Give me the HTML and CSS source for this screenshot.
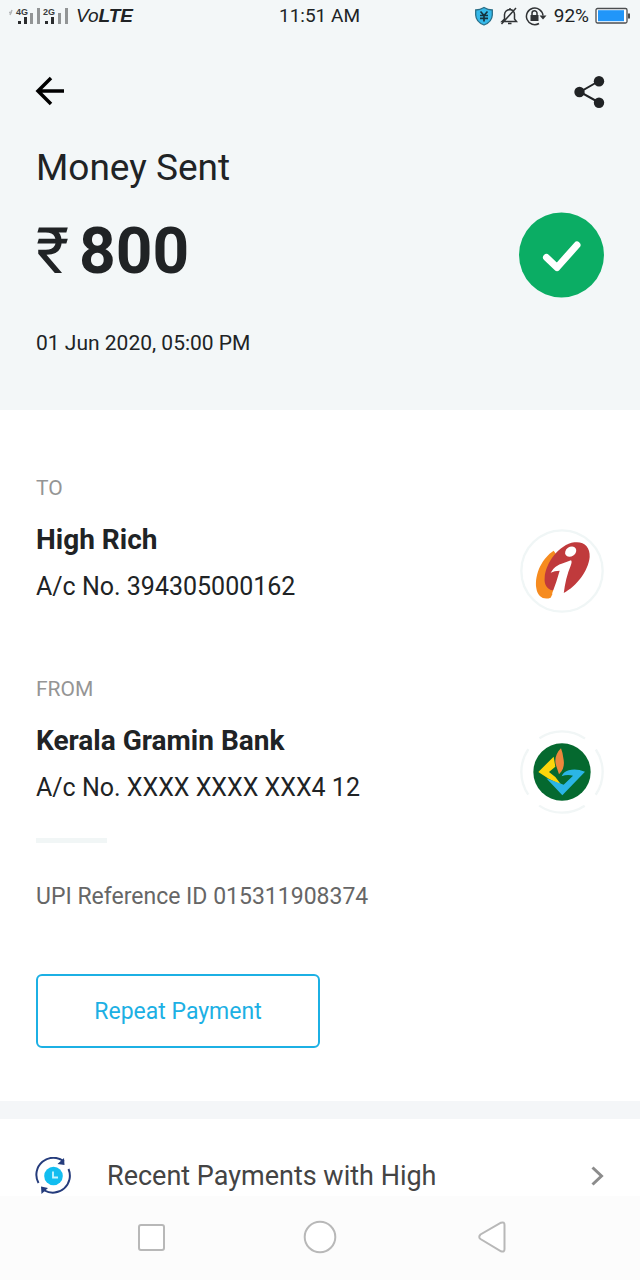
FILE: index.html
```html
<!DOCTYPE html>
<html lang="en">
<head>
<meta charset="utf-8">
<meta name="viewport" content="width=device-width, initial-scale=1">
<title>Money Sent</title>
<link rel="stylesheet" href="styles.css">
</head>
<body>
<div class="screen">
  <header class="summary">
    <div class="status">
      <div class="status-left">
        <svg class="signal" viewBox="0 0 64 24" width="64" height="24">
          <path d="M1 8.500h3M4 6l-2 5" stroke="#b5b8ba" stroke-width="1.500" fill="none"/>
          <text x="8" y="11" class="signal-text">4G</text>
          <path fill="#2a2c2e" d="M10 17h3v3h-3zM16 13h3v7h-3zM37 17h3v3h-3zM43 13h3v7h-3z"/>
          <path fill="#929596" d="M22 9h3v11h-3zM29 4h3v16h-3zM50 9h3v11h-3zM57 4h3v16h-3z"/>
          <text x="35" y="11" class="signal-text">2G</text>
        </svg>
        <span class="volte">Vo<b>LTE</b></span>
      </div>
      <span class="clock">11:51 AM</span>
      <div class="status-right">
        <svg viewBox="0 0 20 20" width="20" height="20">
          <path d="M10 1.500Q14 4 18.300 4V9Q18 16 10 19Q2 16 1.700 9V4Q6 4 10 1.500Z" fill="#35b9ea" stroke="#2a6f88" stroke-width="1.300"/>
          <path d="M6.500 5.500L10 9.500L13.500 5.500M6 9.500h8M6 12.300h8M10 9.500v6" fill="none" stroke="#143340" stroke-width="1.700"/>
        </svg>
        <svg viewBox="0 0 18 20" width="18" height="20">
          <path d="M2 15.500h14.500l-2-2.500V8q-.5-4-4.500-4.500Q5 4 4.500 8.500V13zM10 3.500V2M8 17.500h3.500M16 2L1.500 18" fill="none" stroke="#303335" stroke-width="1.500"/>
        </svg>
        <svg viewBox="0 0 24 20" width="24" height="20">
          <path d="M15 17.500A8.300 8.300 0 1 1 19 9.500" fill="none" stroke="#303335" stroke-width="1.500"/>
          <path d="M15.500 9.500h7L19 13.500zM6.500 9h8v6h-8z" fill="#303335"/>
          <path d="M8 9V7.300a2.500 2.500 0 0 1 5 0V9" fill="none" stroke="#303335" stroke-width="1.500"/>
        </svg>
        <span class="percent">92%</span>
        <svg viewBox="0 0 36 18" width="36" height="18">
          <rect x="1" y="1.500" width="31" height="14.500" rx="1.500" fill="#fff" stroke="#4b4e50" stroke-width="1.300"/>
          <path fill="#2196f9" d="M3 3.200h26v11H3z"/>
          <path fill="#4b4e50" d="M33 6.500h2v5h-2z"/>
        </svg>
      </div>
    </div>

    <div class="appbar">
      <button class="icon-button" aria-label="Back">
        <svg viewBox="0 0 30 30" width="30" height="30">
          <path d="M29 15H3M16 2L3 15l13 13" fill="none" stroke="#000" stroke-width="3.500"/>
        </svg>
      </button>
      <button class="icon-button" aria-label="Share">
        <svg viewBox="0 0 32 34" width="32" height="34">
          <path d="M26 7L7 18l19 10.500" fill="none" stroke="#202325" stroke-width="2"/>
          <g fill="#202325"><circle cx="26" cy="7.200" r="5.200"/><circle cx="6.500" cy="18" r="5.200"/><circle cx="26" cy="28.700" r="5.200"/></g>
        </svg>
      </button>
    </div>

    <h1 class="title">Money Sent</h1>
    <div class="amount-row">
      <div class="amount"><span class="rupee">₹</span><span>800</span></div>
      <svg viewBox="0 0 86 86" width="86" height="86">
        <circle cx="43.500" cy="43" r="42.500" fill="#0bad64"/>
        <path d="M28.500 45.500L39 55.500L59 33" fill="none" stroke="#fff" stroke-width="7" stroke-linecap="round" stroke-linejoin="round"/>
      </svg>
    </div>
    <p class="date">01 Jun 2020, 05:00 PM</p>
  </header>

  <main class="details">
    <section class="party">
      <h2 class="label">TO</h2>
      <div class="party-row">
        <div>
          <p class="name">High Rich</p>
          <p class="account">A/c No. 394305000162</p>
        </div>
        <svg class="logo" viewBox="27 26 252 252">
          <circle cx="153" cy="152" r="122" fill="#fff" stroke="#f0f6f6" stroke-width="7"/>
          <path d="M128 91C94 113 70 160 76 204C80 231 100 240 119 232L132 205L170 150Z" fill="#f68b1f"/>
          <path d="M190 66C219 62 238 80 236 110C232 152 197 198 158 218L126 210C108 208 99 192 101 172C104 128 144 73 190 66Z" fill="#c03a3c"/>
          <ellipse cx="179" cy="94" rx="18" ry="14" transform="rotate(-35 179 94)" fill="#fff"/>
          <path d="M119 157Q130 136 158 128L180 120Q184 124 179 136Q164 171 158 220L123 220Q137 184 146 151Q130 151 119 157Z" fill="#fff"/>
        </svg>
      </div>
    </section>

    <section class="party">
      <h2 class="label">FROM</h2>
      <div class="party-row">
        <div>
          <p class="name">Kerala Gramin Bank</p>
          <p class="account">A/c No. XXXX XXXX XXX4 12</p>
        </div>
        <svg class="logo" viewBox="29 28 252 252">
          <circle cx="155" cy="154" r="122" fill="none" stroke="#f1f6f6" stroke-width="7" pathLength="360" stroke-dasharray="68 22" stroke-dashoffset="34"/>
          <circle cx="155" cy="154" r="86" fill="#05692f"/>
          <path d="M130 108L84 154L115 174L154 194L135 169L116 154L135 138Z" fill="#fcd50b"/>
          <path d="M152 83C136 98 131 119 138 137L146 161C163 144 162 126 159 112Q158 99 152 83Z" fill="#ee873c"/>
          <path d="M108 173L156 224L224 153Q196 142 175 149Q159 154 154 167Q170 160 188 165L160 192Z" fill="#2bb5e6"/>
        </svg>
      </div>
    </section>

    <hr class="rule">
    <p class="reference">UPI Reference ID 015311908374</p>
    <button class="repeat">Repeat Payment</button>
  </main>

  <a class="recent" href="#">
    <svg viewBox="0 0 38 38" width="38" height="38">
      <g fill="none" stroke="#253c7c" stroke-width="2">
        <path d="M3.500 26A17 17 0 0 1 29 4.500M33.500 12A17 17 0 0 1 9.500 33.500"/>
      </g>
      <path d="M29 1l.5 7-7-1zM6.500 37L6 29.500l7 1.500z" fill="#253c7c"/>
      <circle cx="18.500" cy="19" r="9.300" fill="#12bdf0"/>
      <path d="M18 14.500v6h5" fill="none" stroke="#c8f4ff" stroke-width="1.800"/>
    </svg>
    <span class="recent-text">Recent Payments with High</span>
    <svg viewBox="0 0 14 22" width="14" height="22">
      <path d="M2.500 2.500l9 8.500-9 8.500" fill="none" stroke="#8c8c8c" stroke-width="3"/>
    </svg>
  </a>

  <nav class="navbar">
    <button class="nav-button" aria-label="Recent apps">
      <svg viewBox="0 0 34 34" width="34" height="34"><rect x="5" y="5" width="25" height="25" rx="2" class="nav-shape"/></svg>
    </button>
    <button class="nav-button" aria-label="Home">
      <svg viewBox="0 0 34 34" width="34" height="34"><circle cx="17" cy="17" r="15.300" class="nav-shape"/></svg>
    </button>
    <button class="nav-button" aria-label="Back">
      <svg viewBox="0 0 34 34" width="34" height="34"><path d="M29 2.700L8.500 14.500Q6 17 8.500 19L29 31.300Q32.500 32.500 32.500 29V5Q32.500 1.500 29 2.700Z" class="nav-shape"/></svg>
    </button>
  </nav>
</div>
</body>
</html>
```
FILE: styles.css
```css
* { box-sizing: border-box; }
body { margin: 0; background: #fff; color: #202325; font-family: Roboto, sans-serif; }
h1, h2, p { margin: 0; font-weight: 400; }
button { padding: 0; border: 0; background: none; font: inherit; }
svg { display: block; flex: none; }

.screen { display: flex; flex-direction: column; min-height: 100vh; }

.summary { padding-bottom: 55px; background: #f3f7f8; }
.status { display: grid; grid-template-columns: 1fr auto 1fr; align-items: center; height: 32px; padding: 0 9px 0 8px; }
.status-left, .status-right { display: flex; align-items: center; }
.status-right { justify-content: flex-end; gap: 6px; }
.signal-text { font: bold 9px "Liberation Sans", sans-serif; fill: #3a3c3e; }
.volte { margin-left: 4px; font: italic 19px/32px "Liberation Sans", sans-serif; }
.clock, .percent { font-size: 19px; line-height: 32px; }

.appbar { display: flex; justify-content: space-between; align-items: center; margin: 37px 35px 0; height: 44px; }
.icon-button { display: flex; align-items: center; height: 44px; }

.title { margin: 31px 36px 0; font-size: 37px; line-height: 48px; }
.amount-row { display: flex; justify-content: space-between; align-items: center; margin: 20px 36px 0; }
.amount { display: flex; gap: 10px; padding-bottom: 6px; font-size: 64px; line-height: 72px; font-weight: 700; }
.rupee { font-weight: 400; }
.date { margin: 33px 36px 0; font-size: 21px; line-height: 24px; }

.details { padding: 66px 36px 53px; }
.party + .party { margin-top: 64px; }
.label { font-size: 21px; line-height: 24px; color: #959595; }
.party-row { display: flex; justify-content: space-between; align-items: flex-start; margin-top: 22px; }
.name { font-size: 28px; line-height: 36px; font-weight: 700; }
.account { margin-top: 13px; font-size: 25px; line-height: 32px; }
.logo { width: 84px; height: 84px; margin-top: 7px; }
.rule { width: 71px; height: 5px; margin: 24px 0 0; border: 0; background: #f1f6f6; }
.reference { margin-top: 38px; font-size: 23px; line-height: 32px; color: #666; }
.repeat { display: block; width: 50%; margin-top: 61px; padding: 20px 0 18px; border: 2px solid #1cb0e4; border-radius: 6px; font-size: 23px; line-height: 32px; color: #1cb0e4; }

.recent { display: flex; align-items: center; padding: 38px 36px 0 35px; border-top: 18px solid #f4f6f8; color: #444; text-decoration: none; }
.recent-text { flex: 1; margin-left: 34px; font-size: 27px; line-height: 36px; }

.navbar { display: flex; justify-content: center; gap: 135px; margin-top: auto; padding: 24px 0 26px; background: #fcfcfc; }
.nav-shape { fill: #fff; stroke: #b8b8b8; stroke-width: 2; }
```
